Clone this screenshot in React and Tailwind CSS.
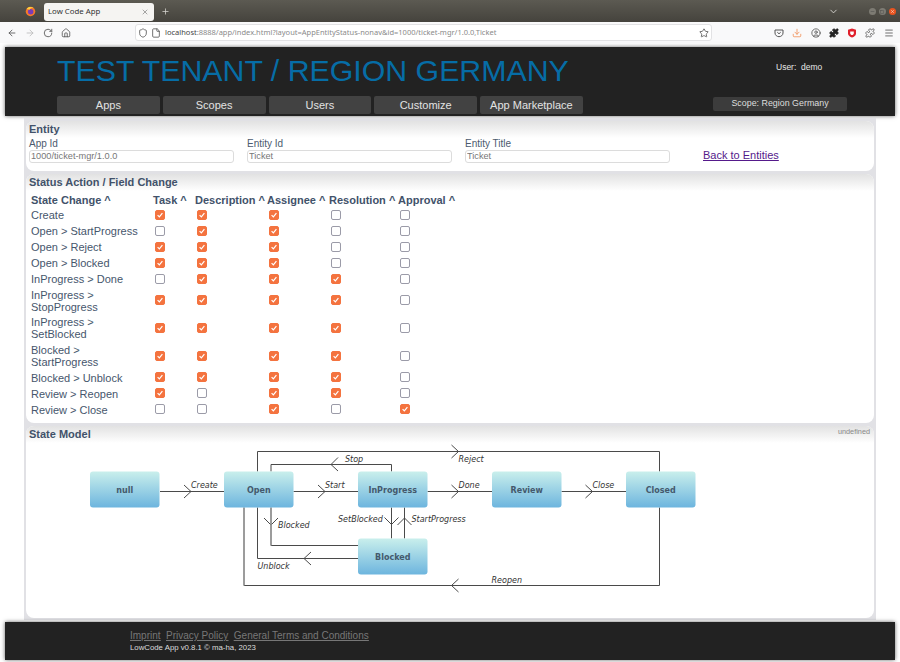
import {
  ArrowLeft,
  ArrowRight,
  RotateCw,
  Home,
  Shield,
  File,
  Star,
  Download,
  CircleUser,
  Puzzle,
  Menu,
  ChevronDown,
  X,
  Plus,
  Minus,
  Square,
} from "lucide-react";

const NAV_ITEMS = ["Apps", "Scopes", "Users", "Customize", "App Marketplace"];

const HEADERS = ["State Change ^", "Task ^", "Description ^", "Assignee ^", "Resolution ^", "Approval ^"];

// task, description, assignee, resolution, approval
const ROWS = [
  ["Create", 1, 1, 1, 0, 0],
  ["Open > StartProgress", 0, 1, 1, 0, 0],
  ["Open > Reject", 1, 1, 1, 0, 0],
  ["Open > Blocked", 1, 1, 1, 0, 0],
  ["InProgress > Done", 0, 1, 1, 1, 0],
  ["InProgress > StopProgress", 1, 1, 1, 1, 0],
  ["InProgress > SetBlocked", 1, 1, 1, 1, 0],
  ["Blocked > StartProgress", 1, 1, 1, 1, 0],
  ["Blocked > Unblock", 1, 1, 1, 1, 0],
  ["Review > Reopen", 1, 0, 1, 1, 0],
  ["Review > Close", 0, 0, 1, 0, 1],
];

const NODES = [
  { label: "null", x: 90, y: 471.5 },
  { label: "Open", x: 224, y: 471.5 },
  { label: "InProgress", x: 358, y: 471.5 },
  { label: "Review", x: 492, y: 471.5 },
  { label: "Closed", x: 626, y: 471.5 },
  { label: "Blocked", x: 358, y: 538.5 },
];

const EDGES = [
  "M160 491.5H224",
  "M293.5 491.5H358",
  "M427.5 491.5H492",
  "M561.5 491.5H626",
  "M391.5 471.5V464.5H271V471.5",
  "M257.5 471.5V451.5H659.5V471.5",
  "M271 507.5V545.5H358",
  "M358 558.5H257.5V507.5",
  "M244 507.5V585.5H659.5V507.5",
  "M391.5 507.5V538.5",
  "M404.5 538.5V507.5",
];

// open chevrons sitting on the edges
const ARROWS = [
  "M184 485L191 491.5L184 498",
  "M318 485L325 491.5L318 498",
  "M451.5 485L458.5 491.5L451.5 498",
  "M585.5 485L592.5 491.5L585.5 498",
  "M338 457.5L331 464.5L338 471",
  "M451.5 445L458.5 451.5L451.5 458",
  "M264 518L271 525L278 518",
  "M311 552L304 558.5L311 565",
  "M458.5 579L451.5 585.5L458.5 592",
  "M384.5 517.5L391.5 524.5L398.5 517.5",
  "M397.5 525L404.5 518L411.5 525",
];

const EDGE_LABELS = [
  { text: "Create", x: 191, y: 488 },
  { text: "Start", x: 325, y: 488 },
  { text: "Done", x: 458.5, y: 488 },
  { text: "Close", x: 592.5, y: 488 },
  { text: "Stop", x: 345, y: 461.5 },
  { text: "Reject", x: 458.5, y: 461.5 },
  { text: "Blocked", x: 278, y: 528 },
  { text: "SetBlocked", x: 338, y: 521.5 },
  { text: "StartProgress", x: 411.5, y: 521.5 },
  { text: "Unblock", x: 257.5, y: 568.5 },
  { text: "Reopen", x: 491.5, y: 582.5 },
];

const Checkbox = ({ checked }) => (
  <span
    className={`flex h-[10px] w-[10px] items-center justify-center rounded-[2px] border ${
      checked ? "border-[#f4733f] bg-[#f4733f]" : "border-[#9b9ba8] bg-white"
    }`}
  >
    {checked ? (
      <svg viewBox="0 0 10 10" className="h-[8px] w-[8px]">
        <path d="M2 5.2L4.2 7.4L8 2.8" fill="none" stroke="#fff" strokeWidth="1.5" />
      </svg>
    ) : null}
  </span>
);

const SectionTitle = ({ children }) => (
  <div className="h-[17px] rounded-t-lg bg-gradient-to-b from-[#e2e2e2] to-white px-[3px] pt-[2px] text-[11px] leading-[13px] font-bold text-[#42526a]">
    {children}
  </div>
);

const Field = ({ label, value }) => (
  <label className="flex w-[205px] flex-col">
    <span className="text-[10px] leading-[12px] text-[#4c5a6e]">{label}</span>
    <input
      readOnly
      value={value}
      className="h-[13px] w-full rounded-[3px] border border-[#dcdcdc] bg-white px-[1px] text-[9.2px] text-[#777] outline-none"
    />
  </label>
);

const FirefoxLogo = () => (
  <svg viewBox="0 0 12 12" className="h-[11px] w-[11px]">
    <circle cx="6" cy="6" r="5.2" fill="#f6792a" />
    <circle cx="6.2" cy="6.4" r="3" fill="#7a3bb8" />
    <path d="M2 3C3 .8 7 .2 9.5 2.2 7.5 1.8 5.5 2.6 5 4 3.8 4 2.8 3.8 2 3Z" fill="#ffcf3c" />
  </svg>
);

const PocketIcon = () => (
  <svg viewBox="0 0 10 10" className="h-[10px] w-[10px]" fill="none" stroke="#555" strokeWidth="1">
    <path d="M1 2H9V5C9 7.2 7 8.7 5 8.7S1 7.2 1 5Z" />
    <path d="M3.3 4.2L5 5.8L6.7 4.2" />
  </svg>
);

const BlockerIcon = () => (
  <svg viewBox="0 0 10 10" className="h-[10px] w-[10px]">
    <path d="M1 1.8L5 .5L9 1.8V5.5C9 7.5 7 9 5 9.6 3 9 1 7.5 1 5.5Z" fill="#e0202c" />
    <path d="M3.2 3.6H6.8V5.4C6.8 6.2 5.8 6.8 5 7 4.2 6.8 3.2 6.2 3.2 5.4Z" fill="#fff" />
  </svg>
);

const StateDiagram = () => (
  <svg viewBox="26 443 849 175" className="h-[175px] w-[849px]">
    <defs>
      <linearGradient id="nodeFill" x1="0" y1="0" x2="0" y2="1">
        <stop offset="0" stopColor="#c9efec" />
        <stop offset="1" stopColor="#6db5de" />
      </linearGradient>
    </defs>
    <g fill="none" stroke="#4a4a4a" strokeWidth="1">
      {EDGES.map((d) => (
        <path key={d} d={d} />
      ))}
      {ARROWS.map((d) => (
        <path key={d} d={d} />
      ))}
    </g>
    <path d="M271 507.5V545.5M244 507.5V585.5" fill="none" stroke="#999" strokeWidth="1.5" />
    {NODES.map((n) => (
      <g key={n.label}>
        <rect x={n.x} y={n.y} width="69.5" height="36" rx="3" fill="url(#nodeFill)" />
        <text
          x={n.x + 34.75}
          y={n.y + 21.5}
          textAnchor="middle"
          className="text-[8px] font-bold"
          style={{ fontFamily: "DejaVu Sans" }}
          fill="#44596c"
        >
          {n.label}
        </text>
      </g>
    ))}
    {EDGE_LABELS.map((l) => (
      <text
        key={l.text}
        x={l.x}
        y={l.y}
        className="text-[8px] italic"
        style={{ fontFamily: "DejaVu Sans" }}
        fill="#333"
      >
        {l.text}
      </text>
    ))}
  </svg>
);

export default function App() {
  return (
    <div className="flex h-[662px] w-[900px] flex-col overflow-hidden bg-white font-['Liberation_Sans',sans-serif]">
      {/* browser title bar */}
      <div className="flex h-[22px] items-center bg-gradient-to-b from-[#5c5a52] to-[#45433d] pt-[1px] text-[#d8d7d2]">
        <div className="flex w-[44px] justify-end pr-[8px]">
          <FirefoxLogo />
        </div>
        <div className="flex h-[18px] w-[110px] items-center justify-between rounded-[3px] bg-[#f5f4f2] px-[4px] font-['Noto_Sans',sans-serif] text-[7.8px] text-[#333]">
          <span>Low Code App</span>
          <X size={8} strokeWidth={1.5} className="mr-[1px] text-[#555]" />
        </div>
        <Plus size={9} className="ml-[7px]" />
        <div className="flex-1" />
        <ChevronDown size={11} className="mr-[30px]" />
        <div className="flex gap-[2.5px] pr-[4px]">
          <span className="flex h-[7.5px] w-[7.5px] items-center justify-center rounded-full bg-[#7d7b73] text-[#444]">
            <Minus size={5} />
          </span>
          <span className="flex h-[7.5px] w-[7.5px] items-center justify-center rounded-full bg-[#7d7b73] text-[#444]">
            <Square size={4} />
          </span>
          <span className="flex h-[7.5px] w-[7.5px] items-center justify-center rounded-full bg-[#e95420] text-[#fff]">
            <X size={5} />
          </span>
        </div>
      </div>

      {/* browser toolbar */}
      <div className="flex h-[21px] items-center bg-[#f9f9fa] text-[#555]">
        <div className="flex w-[135px] items-center gap-[8px] pl-[7px]">
          <ArrowLeft size={10} />
          <ArrowRight size={10} className="text-[#bbb]" />
          <RotateCw size={10} />
          <Home size={10} />
        </div>
        <div className="flex h-[17px] w-[577px] items-center rounded-[3px] border border-[#e2e2e4] bg-white pl-[2px] pr-[2px] text-[7.5px] text-[#8a8a8a]">
          <Shield size={10} className="text-[#555]" />
          <File size={10} className="ml-[3px] text-[#555]" />
          <span className="ml-[4px] flex-1 font-['Noto_Sans',sans-serif]">
            <span className="text-[#444]">localhost</span>:8888/app/index.html?layout=AppEntityStatus-nonav&amp;id=1000/ticket-mgr/1.0.0,Ticket
          </span>
          <Star size={10} className="text-[#555]" />
        </div>
        <div className="ml-[62px] flex items-center gap-[8.3px]">
          <PocketIcon />
          <Download size={10} className="text-[#f0935c]" />
          <CircleUser size={10} />
          <Puzzle size={10} className="fill-[#222] text-[#222]" />
          <BlockerIcon />
          <Puzzle size={10} />
          <Menu size={10} />
        </div>
      </div>

      {/* page */}
      <div className="flex flex-1 flex-col pt-[4px]">
        <header className="mx-[5px] flex h-[69px] justify-between bg-[#222] pl-[52px] pr-[48px] shadow-[0_0_4px_#666]">
          <div className="flex flex-col pt-[6px]">
            <h1 className="text-[30.3px] leading-[36px] text-[#066da6]">TEST TENANT / REGION GERMANY</h1>
            <nav className="mt-[7px] flex gap-[3px]">
              {NAV_ITEMS.map((item) => (
                <a
                  key={item}
                  className="flex h-[18px] w-[102.75px] shrink-0 items-center justify-center rounded-[2px] bg-[#424242] text-[11px] text-[#e2e2e2]"
                >
                  {item}
                </a>
              ))}
            </nav>
          </div>
          <div className="flex w-[134px] flex-col justify-between pb-[5px] pt-[15px]">
            <div className="whitespace-pre pl-[63px] text-[8.5px] leading-[10px] text-[#e6e6e6]">User:  demo</div>
            <div className="flex h-[14px] items-center justify-center rounded-[2px] bg-[#3c3c3c] text-[8.9px] text-[#dedede]">
              Scope: Region Germany
            </div>
          </div>
        </header>

        <main className="mx-[24px] mt-[2px] flex h-[502px] flex-col gap-[3px] bg-[#e1e1e5] px-[2px] pb-[2px] pt-[3px]">
          <section className="h-[50px] rounded-lg bg-white">
            <SectionTitle>Entity</SectionTitle>
            <div className="flex items-start gap-[13px] px-[3px]">
              <Field label="App Id" value="1000/ticket-mgr/1.0.0" />
              <Field label="Entity Id" value="Ticket" />
              <Field label="Entity Title" value="Ticket" />
              <a className="ml-[20px] mt-[10px] text-[11px] leading-[14px] text-[#551a8b] underline">Back to Entities</a>
            </div>
          </section>

          <section className="h-[249px] rounded-lg bg-white">
            <SectionTitle>Status Action / Field Change</SectionTitle>
            <table className="ml-[3px] w-[460px] table-fixed border-collapse text-left text-[11px] text-[#46566c]">
              <colgroup>
                <col className="w-[122px]" />
                <col className="w-[42px]" />
                <col className="w-[72px]" />
                <col className="w-[62px]" />
                <col className="w-[69px]" />
                <col />
              </colgroup>
              <thead>
                <tr className="h-[16px]">
                  {HEADERS.map((h) => (
                    <th key={h} className="whitespace-nowrap px-[2px] pt-[2px] text-[11px] leading-[14px] font-bold text-[#42526a]">
                      {h}
                    </th>
                  ))}
                </tr>
              </thead>
              <tbody>
                {ROWS.map(([name, ...flags]) => (
                  <tr key={name} className="h-[16px]">
                    <td className="px-[2px] py-[1.5px] leading-[12.33px]">{name}</td>
                    {flags.map((on, i) => (
                      <td key={i} className="pl-[3.5px] pb-[1px] align-middle">
                        <Checkbox checked={on === 1} />
                      </td>
                    ))}
                  </tr>
                ))}
              </tbody>
            </table>
          </section>

          <section className="relative flex-1 rounded-lg bg-white">
            <SectionTitle>State Model</SectionTitle>
            <span className="absolute right-[4px] top-[1px] text-[7.3px] text-[#888]">undefined</span>
            <StateDiagram />
          </section>
        </main>

        <footer className="mx-[5px] mt-[2px] h-[38px] bg-[#222] pl-[125px] pt-[7px] shadow-[0_0_4px_#666]">
          <div className="flex gap-[5.5px] text-[10px] leading-[13px] text-[#777] underline">
            <a>Imprint</a>
            <a>Privacy Policy</a>
            <a>General Terms and Conditions</a>
          </div>
          <div className="mt-[1px] text-[7.8px] leading-[10px] text-[#dcdcdc]">LowCode App v0.8.1 © ma-ha, 2023</div>
        </footer>
      </div>
    </div>
  );
}
